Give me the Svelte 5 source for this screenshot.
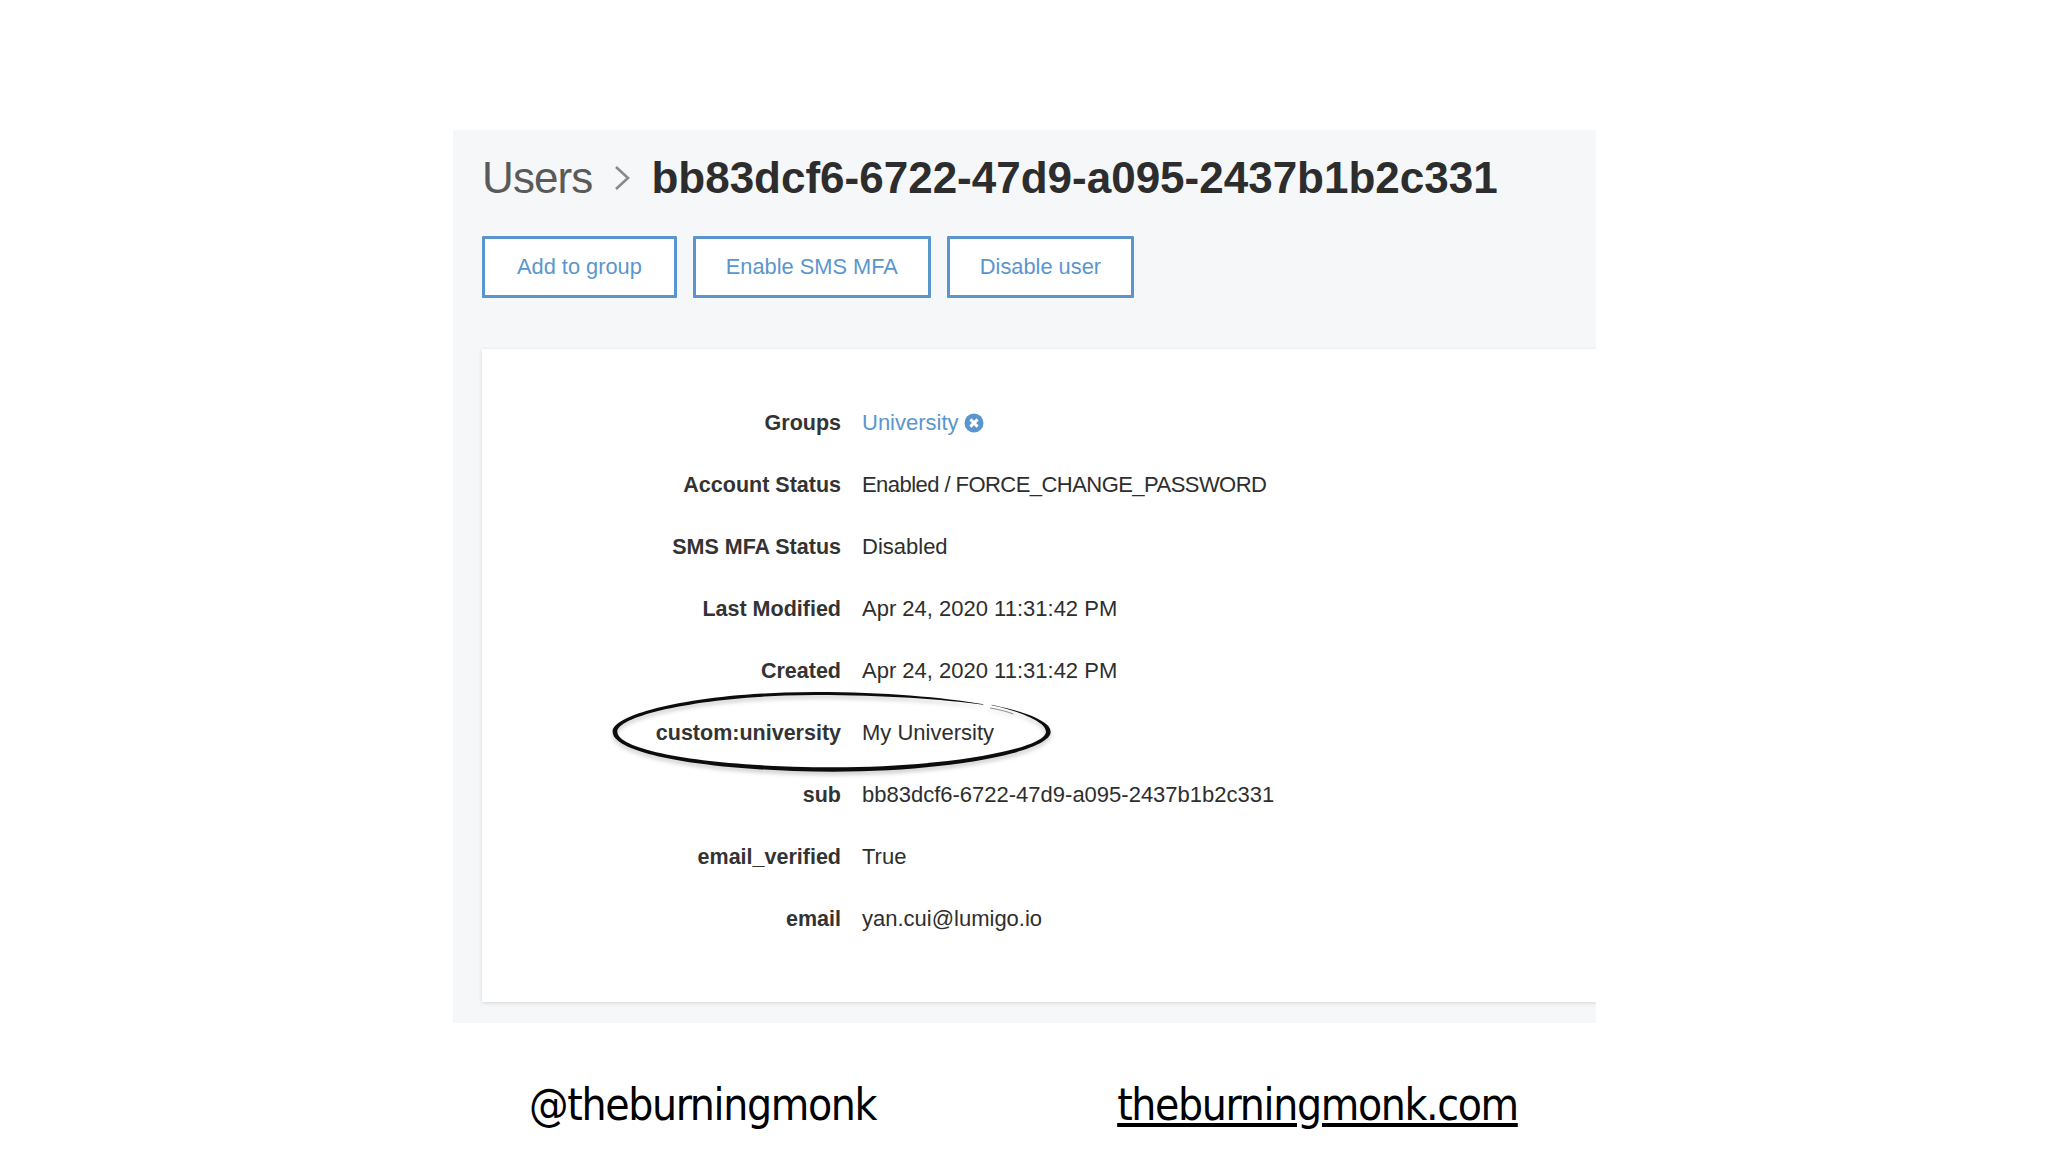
<script>
	const rows = [
		{ label: 'Account Status', value: 'Enabled / FORCE_CHANGE_PASSWORD', tight: true },
		{ label: 'SMS MFA Status', value: 'Disabled' },
		{ label: 'Last Modified', value: 'Apr 24, 2020 11:31:42 PM' },
		{ label: 'Created', value: 'Apr 24, 2020 11:31:42 PM' },
		{ label: 'custom:university', value: 'My University' },
		{ label: 'sub', value: 'bb83dcf6-6722-47d9-a095-2437b1b2c331' },
		{ label: 'email_verified', value: 'True' },
		{ label: 'email', value: 'yan.cui@lumigo.io' }
	];
	const buttons = ['Add to group', 'Enable SMS MFA', 'Disable user'];
</script>

<main class="slide">
	<section class="panel">
		<h1 class="title">
			<span class="crumb">Users</span>
			<svg class="chevron" viewBox="0 0 16 26" aria-hidden="true">
				<path d="M2 2 L14 13 L2 24" fill="none" stroke="#8a8a8a" stroke-width="2.6" />
			</svg>
			<span class="id">bb83dcf6-6722-47d9-a095-2437b1b2c331</span>
		</h1>

		<div class="actions">
			{#each buttons as b}
				<button class="btn">{b}</button>
			{/each}
		</div>

		<div class="card">
			<div class="row">
				<span class="label">Groups</span>
				<span class="value group">
					University
					<svg class="remove" viewBox="0 0 20 20" aria-hidden="true">
						<circle cx="10" cy="10" r="9.5" fill="#5a96cd" />
						<path d="M6.4 6.4 L13.6 13.6 M13.6 6.4 L6.4 13.6" stroke="#fff" stroke-width="3" />
					</svg>
				</span>
			</div>
			{#each rows as r}
				<div class="row">
					<span class="label">{r.label}</span>
					<span class="value" class:tight={r.tight}>{r.value}</span>
				</div>
			{/each}

			<!-- hand drawn circle around the custom attribute -->
			<svg class="scribble" viewBox="0 0 1440 390" aria-hidden="true">
				<path
					d="M1175 104 C1260 122 1352 150 1352 185 C1352 245 1050 305 700 305 C350 305 38 255 38 185 C38 130 300 66 650 66 C850 66 1030 82 1150 103 L1150 104 C1030 88 850 75 650 75 C320 75 52 135 52 185 C52 245 350 292 700 292 C1050 292 1338 235 1338 185 C1338 155 1260 124 1175 106 Z"
					fill="#0c0c0c"
				/>
				<path d="M1170 114 C1195 118 1220 124 1240 132" fill="none" stroke="#555" stroke-width="2" />
			</svg>
		</div>
	</section>

	<footer class="footer">
		<span>@theburningmonk</span>
		<a href="#top">theburningmonk.com</a>
	</footer>
</main>

<style>
	:global(body) {
		margin: 0;
		background: #fff;
	}

	.slide {
		width: 2048px;
		height: 1152px;
		overflow: hidden;
		padding: 130px 0 0 453px;
		box-sizing: border-box;
		font-family: 'Liberation Sans', Arial, sans-serif;
	}

	.panel {
		width: 1143px;
		height: 893px;
		box-sizing: border-box;
		padding: 20px 0 0 29px;
		background: #f6f7f9;
		overflow: hidden;
	}

	.title {
		display: flex;
		align-items: center;
		height: 56px;
		margin: 0;
		font-size: 44px;
		line-height: 56px;
	}

	.crumb {
		font-weight: 400;
		color: #5a5a5a;
		letter-spacing: -0.9px;
	}

	.chevron {
		width: 16px;
		height: 26px;
		margin: 0 21px 0 22px;
	}

	.id {
		font-weight: 700;
		color: #2d2d2d;
	}

	.actions {
		display: flex;
		gap: 16px;
		margin-top: 30px;
	}

	.btn {
		height: 62px;
		padding: 0 30px;
		background: #fff;
		border: 3px solid #5a96cd;
		border-radius: 1px;
		color: #5a96cd;
		font: 400 21.8px 'Liberation Sans', Arial, sans-serif;
	}

	.btn:first-child {
		padding: 0 32px;
	}

	.card {
		position: relative;
		margin-top: 51px;
		height: 653px;
		box-sizing: border-box;
		padding-top: 43px;
		background: #fff;
		box-shadow: 0 1px 4px rgba(0, 0, 0, 0.14);
	}

	.row {
		display: grid;
		grid-template-columns: 359px 1fr;
		column-gap: 21px;
		align-items: center;
		height: 62px;
		font-size: 22px;
		color: #2e2e2e;
	}

	.label {
		font-size: 21.5px;
		font-weight: 700;
		text-align: right;
		color: #333;
	}

	.tight {
		letter-spacing: -0.55px;
	}

	.group {
		display: flex;
		align-items: center;
		gap: 5px;
		color: #5a96cd;
	}

	.remove {
		width: 20px;
		height: 20px;
	}

	.scribble {
		position: absolute;
		left: 118px;
		top: 321px;
		width: 480px;
		height: 130px;
		filter: drop-shadow(0 3px 2px rgba(0, 0, 0, 0.22));
	}

	.footer {
		display: flex;
		gap: 241px;
		margin-top: 52px;
		padding-left: 76px;
		font-family: 'DejaVu Sans Condensed', 'DejaVu Sans', sans-serif;
		font-stretch: condensed;
		font-size: 44px;
		letter-spacing: -1.35px;
		line-height: 60px;
		color: #000;
	}

	.footer a {
		color: #000;
		text-decoration: underline;
	}
</style>
